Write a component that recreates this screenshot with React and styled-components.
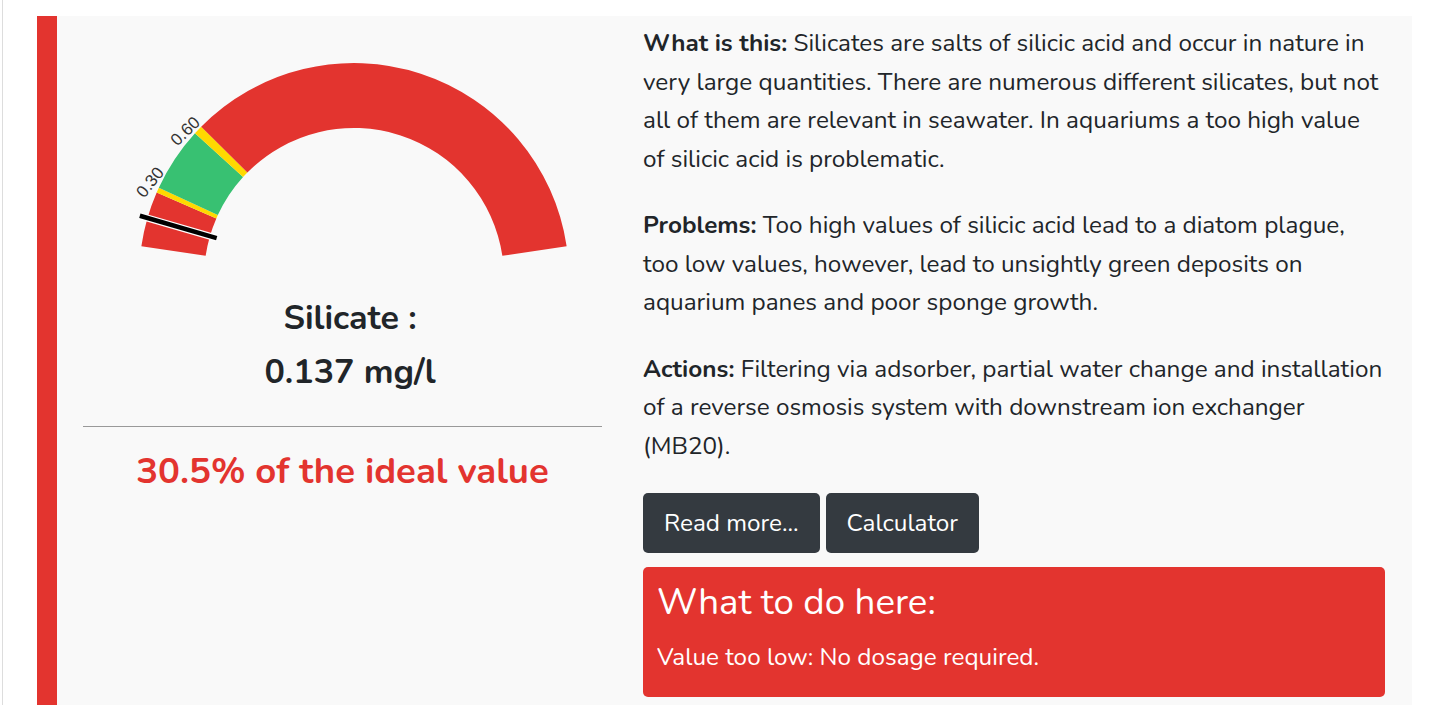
import React from "react";
import styled, { createGlobalStyle } from "styled-components";

const RED = "#e3342f";

const GlobalStyle = createGlobalStyle`
  html, body {
    margin: 0;
    padding: 0;
    background: #ffffff;
  }
  body {
    font-family: "Nunito", "Open Sans", "Liberation Sans", sans-serif;
    color: #212529;
  }
  * {
    box-sizing: border-box;
  }
`;

const Page = styled.div`
  margin-left: 2px;
  border-left: 1px solid #dddddd;
  padding: 16px 30px 0 34px;
  min-height: 705px;
`;

const Card = styled.div`
  display: flex;
  background: #f9f9f9;
  border-left: 20px solid ${RED};
  min-height: 720px;
  padding-bottom: 20px;
`;

const LeftCol = styled.div`
  width: 571px;
  flex-shrink: 0;
  display: flex;
  flex-direction: column;
  align-items: stretch;
  padding: 0 26px;
`;

const GaugeBox = styled.div`
  margin: 0 -26px;
  height: 270px;
`;

const Reading = styled.div`
  margin-top: 5px;
  text-align: center;
  font-size: 34px;
  font-weight: 700;
  line-height: 54px;
  padding-left: 15px;
`;

const Rule = styled.hr`
  margin: 27px 0 0;
  border: 0;
  border-top: 1px solid #999999;
`;

const Ideal = styled.div`
  margin-top: 22px;
  text-align: center;
  font-size: 36.5px;
  font-weight: 700;
  line-height: 44px;
  color: ${RED};
`;

const RightCol = styled.div`
  flex: 1;
  padding: 8px 28px 0 15px;
`;

const Para = styled.p`
  margin: 0 0 28px;
  font-size: 24.3px;
  line-height: 38.5px;

  b {
    font-weight: 700;
  }
`;

const Buttons = styled.div`
  display: flex;
  gap: 6px;
`;

const Button = styled.button`
  height: 60px;
  padding: 0 21px;
  border: 0;
  border-radius: 5px;
  background: #343a40;
  color: #ffffff;
  font-family: inherit;
  font-size: 24.3px;
`;

const Alert = styled.div`
  margin-top: 14px;
  margin-right: -1px;
  background: ${RED};
  color: #ffffff;
  border-radius: 5px;
  padding: 13px 14px 25px;
`;

const AlertTitle = styled.h3`
  margin: 0;
  font-size: 36.7px;
  font-weight: 400;
  line-height: 44px;
`;

const AlertText = styled.p`
  margin: 18px 0 0;
  font-size: 24.3px;
  line-height: 30px;
`;

const CX = 297;
const CY = 262;
const R_OUT = 215;
const R_IN = 150;

function pt(angle, r) {
  const a = (angle * Math.PI) / 180;
  return [CX - r * Math.cos(a), CY - r * Math.sin(a)];
}

function arc(a1, a2) {
  const [x1, y1] = pt(a1, R_OUT);
  const [x2, y2] = pt(a2, R_OUT);
  const [x3, y3] = pt(a2, R_IN);
  const [x4, y4] = pt(a1, R_IN);
  const large = a2 - a1 > 180 ? 1 : 0;
  return `M${x1} ${y1} A${R_OUT} ${R_OUT} 0 ${large} 1 ${x2} ${y2} L${x3} ${y3} A${R_IN} ${R_IN} 0 ${large} 0 ${x4} ${y4} Z`;
}

const segments = [
  { from: 8.5, to: 23.4, color: RED },
  { from: 23.4, to: 24.8, color: "#ffd900" },
  { from: 24.8, to: 42.3, color: "#38c172" },
  { from: 42.3, to: 44.7, color: "#ffd900" },
  { from: 44.7, to: 171.5, color: RED },
];

const labels = [
  { text: "0.30", x: -203, y: -95, rot: -52 },
  { text: "0.60", x: -168, y: -146, rot: -44 },
];

function Gauge() {
  const [nx1, ny1] = pt(16.2, 223);
  const [nx2, ny2] = pt(16.2, 143);
  return (
    <svg width="571" height="270" viewBox="0 0 571 270">
      {segments.map((s, i) => (
        <path key={i} d={arc(s.from, s.to)} fill={s.color} />
      ))}
      {labels.map((l) => (
        <text
          key={l.text}
          x={CX + l.x}
          y={CY + l.y}
          transform={`rotate(${l.rot} ${CX + l.x} ${CY + l.y})`}
          textAnchor="middle"
          dominantBaseline="middle"
          fontFamily="'Liberation Sans', sans-serif"
          fontSize="17"
          fill="#333"
        >
          {l.text}
        </text>
      ))}
      <line x1={nx1} y1={ny1} x2={nx2} y2={ny2} stroke="#ffffff" strokeWidth="7" />
      <line x1={nx1} y1={ny1} x2={nx2} y2={ny2} stroke="#000000" strokeWidth="4.5" />
    </svg>
  );
}

export default function App() {
  return (
    <>
      <GlobalStyle />
      <Page>
        <Card>
          <LeftCol>
            <GaugeBox>
              <Gauge />
            </GaugeBox>
            <Reading>
              Silicate :
              <br />
              0.137 mg/l
            </Reading>
            <Rule />
            <Ideal>30.5% of the ideal value</Ideal>
          </LeftCol>
          <RightCol>
            <Para>
              <b>What is this:</b> Silicates are salts of silicic acid and occur in nature in
              very large quantities. There are numerous different silicates, but not all of
              them are relevant in seawater. In aquariums a too high value of silicic acid is
              problematic.
            </Para>
            <Para>
              <b>Problems:</b> Too high values of silicic acid lead to a diatom plague, too low
              values, however, lead to unsightly green deposits on aquarium panes and poor
              sponge growth.
            </Para>
            <Para>
              <b>Actions:</b> Filtering via adsorber, partial water change and installation of
              a reverse osmosis system with downstream ion exchanger (MB20).
            </Para>
            <Buttons>
              <Button>Read more...</Button>
              <Button>Calculator</Button>
            </Buttons>
            <Alert>
              <AlertTitle>What to do here:</AlertTitle>
              <AlertText>Value too low: No dosage required.</AlertText>
            </Alert>
          </RightCol>
        </Card>
      </Page>
    </>
  );
}
